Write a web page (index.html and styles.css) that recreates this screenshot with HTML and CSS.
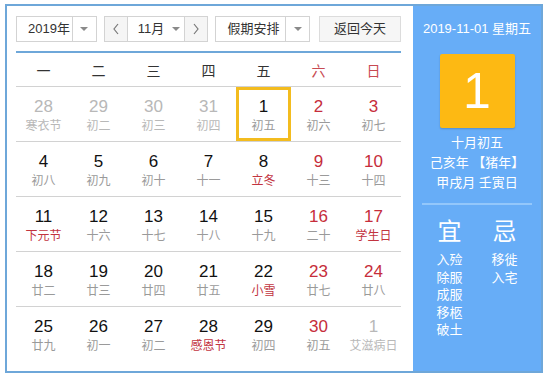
FILE: index.html
```html
<!DOCTYPE html>
<html lang="zh">
<head>
<meta charset="utf-8">
<link rel="stylesheet" href="styles.css">
</head>
<body>
<div class="cal">
  <div class="main">
    <div class="controls">
      <div class="select year"><span class="label">2019年</span><span class="drop"><i class="tri"></i></span></div>
      <div class="month">
        <span class="nav"><svg width="8" height="12" viewBox="0 0 8 12"><polyline points="6,1 2,6 6,11" fill="none" stroke="#777" stroke-width="1.2"/></svg></span>
        <span class="mid">11月<i class="tri"></i></span>
        <span class="nav"><svg width="8" height="12" viewBox="0 0 8 12"><polyline points="2,1 6,6 2,11" fill="none" stroke="#777" stroke-width="1.2"/></svg></span>
      </div>
      <div class="select holiday"><span class="label">假期安排</span><span class="drop"><i class="tri"></i></span></div>
      <div class="today-btn">返回今天</div>
    </div>
    <div class="grid">
      <div class="week head">
        <span>一</span><span>二</span><span>三</span><span>四</span><span>五</span><span class="we">六</span><span class="we">日</span>
      </div>
      <div class="week">
        <div class="day other"><b>28</b><i>寒衣节</i></div>
        <div class="day other"><b>29</b><i>初二</i></div>
        <div class="day other"><b>30</b><i>初三</i></div>
        <div class="day other"><b>31</b><i>初四</i></div>
        <div class="day today"><b>1</b><i>初五</i></div>
        <div class="day we"><b>2</b><i>初六</i></div>
        <div class="day we"><b>3</b><i>初七</i></div>
      </div>
      <div class="week">
        <div class="day"><b>4</b><i>初八</i></div>
        <div class="day"><b>5</b><i>初九</i></div>
        <div class="day"><b>6</b><i>初十</i></div>
        <div class="day"><b>7</b><i>十一</i></div>
        <div class="day fest"><b>8</b><i>立冬</i></div>
        <div class="day we"><b>9</b><i>十三</i></div>
        <div class="day we"><b>10</b><i>十四</i></div>
      </div>
      <div class="week">
        <div class="day fest"><b>11</b><i>下元节</i></div>
        <div class="day"><b>12</b><i>十六</i></div>
        <div class="day"><b>13</b><i>十七</i></div>
        <div class="day"><b>14</b><i>十八</i></div>
        <div class="day"><b>15</b><i>十九</i></div>
        <div class="day we"><b>16</b><i>二十</i></div>
        <div class="day we fest"><b>17</b><i>学生日</i></div>
      </div>
      <div class="week">
        <div class="day"><b>18</b><i>廿二</i></div>
        <div class="day"><b>19</b><i>廿三</i></div>
        <div class="day"><b>20</b><i>廿四</i></div>
        <div class="day"><b>21</b><i>廿五</i></div>
        <div class="day fest"><b>22</b><i>小雪</i></div>
        <div class="day we"><b>23</b><i>廿七</i></div>
        <div class="day we"><b>24</b><i>廿八</i></div>
      </div>
      <div class="week last">
        <div class="day"><b>25</b><i>廿九</i></div>
        <div class="day"><b>26</b><i>初一</i></div>
        <div class="day"><b>27</b><i>初二</i></div>
        <div class="day fest"><b>28</b><i>感恩节</i></div>
        <div class="day"><b>29</b><i>初四</i></div>
        <div class="day we"><b>30</b><i>初五</i></div>
        <div class="day other"><b>1</b><i>艾滋病日</i></div>
      </div>
    </div>
  </div>
  <div class="panel">
    <div class="pdate">2019-11-01 星期五</div>
    <div class="bigday">1</div>
    <div class="pline first">十月初五</div>
    <div class="pline">己亥年 【猪年】</div>
    <div class="pline">甲戌月 壬寅日</div>
    <div class="sep"></div>
    <div class="yiji">
      <div class="col">
        <div class="yjh">宜</div>
        <div class="yji">入殓</div>
        <div class="yji">除服</div>
        <div class="yji">成服</div>
        <div class="yji">移柩</div>
        <div class="yji">破土</div>
      </div>
      <div class="col">
        <div class="yjh">忌</div>
        <div class="yji">移徙</div>
        <div class="yji">入宅</div>
      </div>
    </div>
  </div>
</div>
</body>
</html>
```
FILE: styles.css
```css
* { box-sizing: border-box; }
html, body { margin: 0; padding: 0; background: #fff; }
body {
  font-family: "Liberation Sans", "Noto Sans CJK SC", Arial, sans-serif;
  color: #333;
}
.cal {
  margin: 4px 0 0 5px;
  width: 538px;
  height: 369px;
  border: 2px solid #6ea7d9;
  display: flex;
}
.main {
  width: 406px;
  padding: 10px 12px 0 9px;
}
.controls {
  display: flex;
  height: 26px;
  margin-bottom: 9px;
  font-size: 13px;
}
.select {
  display: flex;
  border: 1px solid #d3d3d3;
  background: #fff;
  height: 26px;
}
.select .label {
  flex: 1;
  padding-left: 11px;
  line-height: 24px;
  color: #333;
}
.select .drop {
  width: 24px;
  border-left: 1px solid #d3d3d3;
  display: flex;
  align-items: center;
  justify-content: center;
}
.tri {
  display: inline-block;
  width: 0;
  height: 0;
  border-left: 4px solid transparent;
  border-right: 4px solid transparent;
  border-top: 4px solid #8a8a8a;
}
.year { width: 81px; }
.month {
  margin-left: 7px;
  width: 105px;
  display: flex;
  border: 1px solid #d3d3d3;
  height: 26px;
}
.month .nav {
  width: 23px;
  background: #f5f5f5;
  display: flex;
  align-items: center;
  justify-content: center;
}
.month .nav:first-child { border-right: 1px solid #d3d3d3; }
.month .nav:last-child { border-left: 1px solid #d3d3d3; }
.month .mid {
  flex: 1;
  display: flex;
  align-items: center;
  padding-left: 10px;
  gap: 8px;
  line-height: 24px;
}
.holiday { margin-left: 7px; width: 95px; }
.today-btn {
  margin-left: 9px;
  width: 82px;
  height: 26px;
  border: 1px solid #dcdcdc;
  background: #f6f6f6;
  text-align: center;
  line-height: 24px;
  color: #333;
}
.grid {
  border-top: 2px solid #6ea7d9;
  width: 385px;
}
.week {
  display: flex;
  border-bottom: 1px solid #d2d2d2;
}
.week.last { border-bottom: none; }
.week.head {
  height: 34px;
  font-size: 14px;
  color: #333;
  align-items: center;
}
.week.head span {
  width: 55px;
  text-align: center;
}
.week.head .we { color: #c84a52; }
.day {
  width: 55px;
  height: 54px;
  padding-top: 10px;
  text-align: center;
}
.day b {
  display: block;
  font-weight: normal;
  font-size: 17px;
  line-height: 20px;
  color: #111;
}
.day i {
  display: block;
  font-style: normal;
  font-size: 12px;
  line-height: 18px;
  color: #9a9a9a;
  white-space: nowrap;
}
.day.we b { color: #c62d3b; }
.day.fest i { color: #c2343f; }
.day.other b, .day.other i { color: #b8b8b8; }
.day.today { box-shadow: inset 0 0 0 3px #f3bc1f; }
.panel {
  flex: 1;
  background: #67adf7;
  color: #fff;
  text-align: center;
  padding-top: 13px;
}
.pdate {
  font-size: 13px;
  line-height: 20px;
}
.bigday {
  margin: 15px auto 0;
  width: 75px;
  height: 74px;
  background: #fdb913;
  border-radius: 2px;
  box-shadow: 0 1px 2px rgba(0,0,0,0.18);
  font-size: 50px;
  line-height: 74px;
}
.pline {
  font-size: 13px;
  line-height: 20px;
}
.pline.first { margin-top: 5px; }
.sep {
  margin: 10px auto 0;
  width: 110px;
  height: 2px;
  background: #93c7fb;
}
.yiji {
  display: flex;
  padding-left: 9px;
  margin-top: 12px;
}
.yiji .col { width: 55px; }
.yjh {
  font-size: 24px;
  line-height: 30px;
  margin-bottom: 4px;
}
.yji {
  font-size: 13px;
  line-height: 17.5px;
}
```
